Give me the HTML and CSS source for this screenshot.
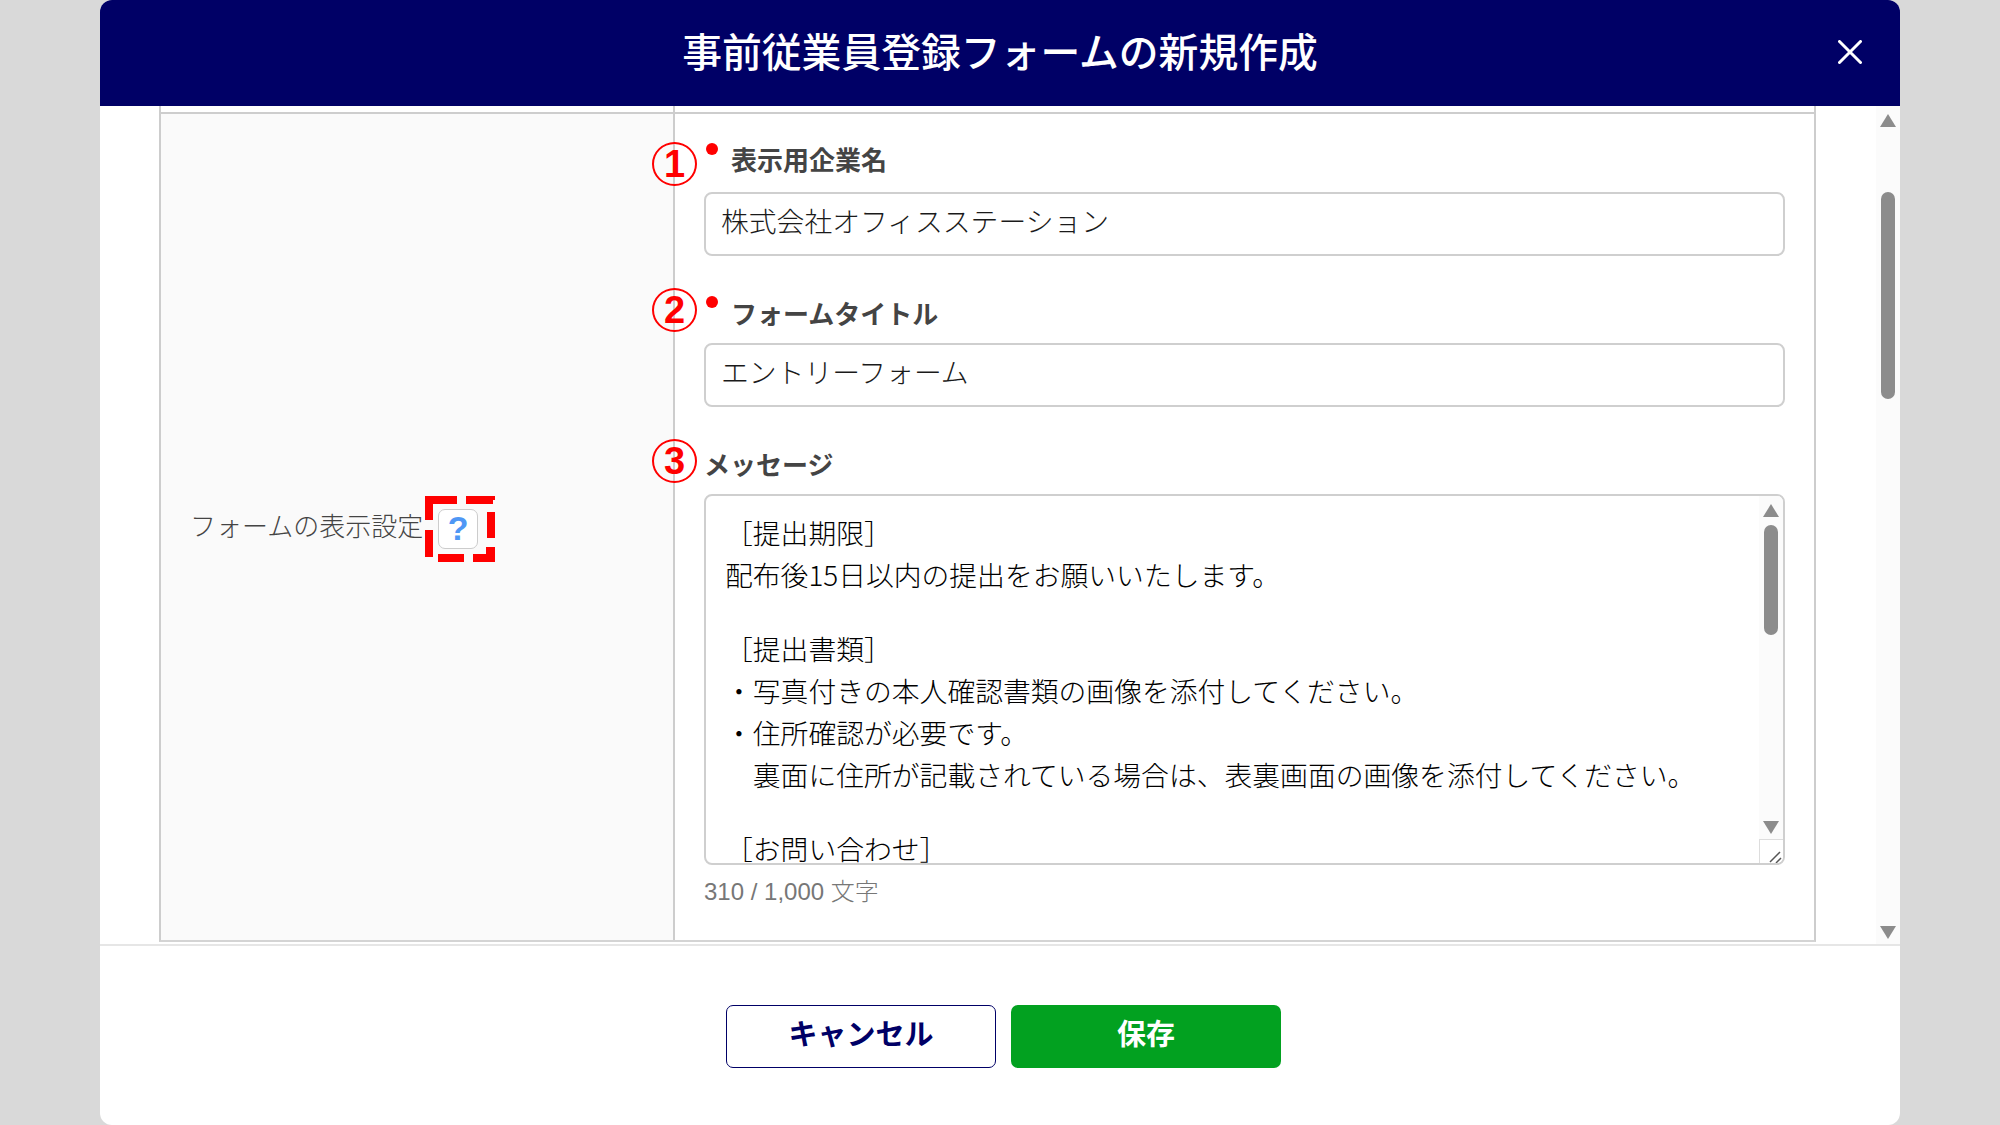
FILE: index.html
```html
<!DOCTYPE html>
<html lang="ja">
<head>
    <meta charset="UTF-8">
    <meta name="viewport" content="width=device-width, initial-scale=1.0">
    <title>事前従業員登録フォームの新規作成</title>
    <link rel="stylesheet" href="styles.css">
</head>
<body>
    <div class="modal">
        <header class="modal-header">
            <h1>事前従業員登録フォームの新規作成</h1>
            <svg class="close-icon" viewBox="0 0 24 24" width="24" height="24">
                <path d="M1.5 1.5 L22.5 22.5 M22.5 1.5 L1.5 22.5" stroke="#fff" stroke-width="3" stroke-linecap="round"/>
            </svg>
        </header>

        <div class="modal-body">
            <div class="table">
                <div class="table-strip">
                    <div class="strip-left"></div>
                    <div class="strip-right"></div>
                </div>
                <div class="row">
                    <div class="row-title">
                        <span>フォームの表示設定</span>
                        <span class="help">
                            <span class="help-box">?</span>
                            <!-- red dashes drawn by hand, they are not evenly spaced -->
                            <svg class="help-dash" viewBox="0 0 70 66" width="70" height="66">
                                <path fill="#ff0000" d="M0 0H32V8H8V24H0Z M41 0H70V4H68V8H41Z M62 16H70V42H62Z M0 34H8V61H0Z M13 58H39V66H13Z M48 58H61V51H70V66H48Z"/>
                            </svg>
                        </span>
                    </div>
                    <div class="row-content">
                        <div class="field field-first">
                            <span class="step">1</span>
                            <div class="field-label required">表示用企業名</div>
                            <input class="text-input" type="text" value="株式会社オフィスステーション">
                        </div>
                        <div class="field">
                            <span class="step">2</span>
                            <div class="field-label required">フォームタイトル</div>
                            <input class="text-input" type="text" value="エントリーフォーム">
                        </div>
                        <div class="field">
                            <span class="step">3</span>
                            <div class="field-label">メッセージ</div>
                            <div class="message">
                                <div class="message-text">
                                    <p>［提出期限］</p>
                                    <p>配布後15日以内の提出をお願いいたします。</p>
                                    <p class="blank"></p>
                                    <p>［提出書類］</p>
                                    <p>・写真付きの本人確認書類の画像を添付してください。</p>
                                    <p>・住所確認が必要です。</p>
                                    <p>　裏面に住所が記載されている場合は、表裏画面の画像を添付してください。</p>
                                    <p class="blank"></p>
                                    <p>［お問い合わせ］</p>
                                </div>
                                <div class="scrollbar scrollbar-inner">
                                    <span class="arrow-up"></span>
                                    <span class="thumb"></span>
                                    <span class="arrow-down"></span>
                                </div>
                                <div class="resizer">
                                    <svg viewBox="0 0 24 24" width="24" height="24">
                                        <path d="M10 22 L20 12 M16 23 L21 18" stroke="#555" stroke-width="1.5" fill="none"/>
                                    </svg>
                                </div>
                            </div>
                            <div class="counter">310 / 1,000 文字</div>
                        </div>
                    </div>
                </div>
            </div>
            <div class="scrollbar scrollbar-outer">
                <span class="arrow-up"></span>
                <span class="thumb"></span>
                <span class="arrow-down"></span>
            </div>
        </div>

        <footer class="modal-footer">
            <button class="btn btn-cancel">キャンセル</button>
            <button class="btn btn-save">保存</button>
        </footer>
    </div>
</body>
</html>
```

FILE: styles.css
```css
* {
    box-sizing: border-box;
}

html, body {
    height: 100%;
}

body {
    margin: 0;
    background-color: #d9d9d9;
    font-family: "Noto Sans CJK JP", "Liberation Sans", sans-serif;
    color: #333;
    overflow: hidden;
}

.modal {
    width: 1800px;
    height: 1125px;
    margin: 0 auto;
    background-color: #fff;
    border-radius: 12px;
    display: flex;
    flex-direction: column;
    overflow: hidden;
}

.modal-header {
    flex: 0 0 106px;
    background-color: #000066;
    color: #fff;
    display: flex;
    align-items: center;
    justify-content: center;
    position: relative;
    padding-bottom: 7px;
}

.modal-header h1 {
    margin: 0;
    font-size: 39.8px;
    font-weight: 500;
    line-height: 1;
}

.close-icon {
    position: absolute;
    right: 38px;
    top: 40px;
}

/* body */
.modal-body {
    flex: 0 0 840px;
    display: flex;
    padding-left: 59px;
    overflow: hidden;
    border-bottom: 2px solid #e6e6e6;
}

.table {
    width: 1657px;
    flex: none;
}

.table-strip {
    height: 6px;
    display: flex;
}

.strip-left {
    width: 516px;
    border-left: 2px solid #cdcdcd;
    border-right: 2px solid #cdcdcd;
}

.strip-right {
    flex: 1;
    border-right: 2px solid #cdcdcd;
}

.row {
    display: flex;
    height: 830px;
    border: 2px solid #cdcdcd;
    border-bottom-color: #d4d4d4;
}

.row-title {
    width: 514px;
    flex: none;
    background-color: #fafafa;
    border-right: 2px solid #cdcdcd;
    display: flex;
    align-items: center;
    padding-left: 29px;
    padding-bottom: 5px;
    font-size: 26px;
    font-weight: 300;
    color: #444;
}

.help {
    position: relative;
    margin-left: 15px;
    margin-top: 8px;
}

.help-box {
    display: flex;
    align-items: center;
    justify-content: center;
    width: 40px;
    height: 40px;
    background-color: #fff;
    border: 1px solid #ccc;
    border-radius: 7px;
    color: #4f97f5;
    font-family: "Liberation Sans", sans-serif;
    font-size: 34px;
    font-weight: 700;
}

.help-dash {
    position: absolute;
    left: -13px;
    top: -13px;
}

.row-content {
    flex: 1;
    padding: 31px 29px 0 29px;
    min-width: 0;
}

.field {
    position: relative;
}

.field + .field {
    margin-top: 40px;
}

.field-label {
    font-size: 26px;
    font-weight: 700;
    line-height: 34px;
    color: #444;
    margin-bottom: 13px;
}

.field-first .field-label {
    margin-top: -3px;
    margin-bottom: 16px;
}

.required {
    padding-left: 27px;
    position: relative;
}

.required::before {
    content: "";
    position: absolute;
    left: 2px;
    top: 0;
    width: 12px;
    height: 12px;
    border-radius: 50%;
    background-color: #ff0000;
}

.field-first .required::before {
    top: 1px;
}

/* red numbers put on the screenshot */
.step {
    position: absolute;
    left: -52px;
    top: -8px;
    width: 45px;
    height: 44px;
    border: 2px solid #ff0000;
    border-radius: 50%;
    color: #ff0000;
    font-family: "Liberation Sans", sans-serif;
    font-size: 38px;
    font-weight: 700;
    line-height: 40px;
    text-align: center;
}

.field-first .step {
    top: 0;
}

.text-input {
    display: block;
    width: 100%;
    height: 64px;
    padding: 0 15px 8px;
    border: 2px solid #cfcfcf;
    border-radius: 8px;
    background-color: #fff;
    font-family: inherit;
    font-size: 27.8px;
    font-weight: 300;
    color: #1a1a1a;
}

.message {
    position: relative;
    height: 371px;
    border: 2px solid #cfcfcf;
    border-radius: 8px;
    overflow: hidden;
}

.message-text {
    padding: 16px 40px 0 19px;
    font-size: 27.8px;
    font-weight: 300;
    line-height: 41.7px;
    color: #000;
}

.message-text p {
    margin: 0;
    white-space: nowrap;
}

.message-text .blank {
    height: 33px;
}

.counter {
    margin-top: 9px;
    font-size: 24px;
    font-weight: 300;
    line-height: 36px;
    font-family: "Liberation Sans", "Noto Sans CJK JP", sans-serif;
    color: #777;
}

/* scrollbars */
.scrollbar {
    background-color: #fbfbfb;
    position: relative;
}

.scrollbar-outer {
    flex: none;
    width: 24px;
    margin-left: 60px;
    height: 100%;
}

.scrollbar-inner {
    position: absolute;
    right: 0;
    top: 0;
    width: 24px;
    height: 345px;
}

.thumb {
    position: absolute;
    background-color: #8c8c8c;
    border-radius: 7px;
    left: 5px;
    width: 14px;
}

.scrollbar-outer .thumb {
    top: 86px;
    height: 207px;
}

.scrollbar-inner .thumb {
    top: 29px;
    height: 110px;
}

.arrow-up,
.arrow-down {
    position: absolute;
    left: 4px;
    width: 0;
    height: 0;
    border-left: 8px solid transparent;
    border-right: 8px solid transparent;
}

.arrow-up {
    border-bottom: 13px solid #8c8c8c;
}

.arrow-down {
    border-top: 13px solid #8c8c8c;
}

.scrollbar-outer .arrow-up {
    top: 8px;
}

.scrollbar-outer .arrow-down {
    bottom: 5px;
}

.scrollbar-inner .arrow-up {
    top: 8px;
}

.scrollbar-inner .arrow-down {
    top: 325px;
}

.resizer {
    position: absolute;
    right: 0;
    bottom: 0;
    width: 24px;
    height: 24px;
    background-color: #fff;
    border-left: 1px solid #ddd;
    border-top: 1px solid #ddd;
}

.resizer svg {
    display: block;
}

/* footer */
.modal-footer {
    flex: 1;
    display: flex;
    justify-content: center;
    gap: 15px;
    padding-top: 59px;
    padding-left: 7px;
}

.btn {
    width: 270px;
    height: 63px;
    border-radius: 7px;
    font-family: inherit;
    font-size: 29px;
    font-weight: 700;
    padding: 0 0 9px;
}

.btn-cancel {
    background-color: #fff;
    border: 1.5px solid #000066;
    color: #000066;
}

.btn-save {
    background-color: #02a120;
    border: none;
    color: #fff;
}
```
